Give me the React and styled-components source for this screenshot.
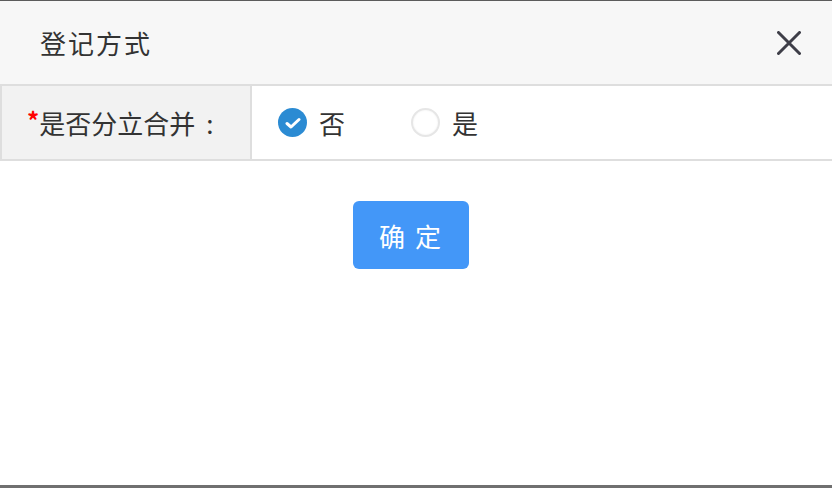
import styled, { createGlobalStyle } from 'styled-components';

const GlobalStyle = createGlobalStyle`
  html, body { margin: 0; padding: 0; background: #fff; }
  body { font-family: "Noto Sans CJK SC", "Noto Sans", sans-serif; color: #333; }
`;

const Frame = styled.div`
  height: 488px;
  box-sizing: border-box;
  border-top: 1px solid #5c5c5c;
  border-bottom: 3px solid #707070;
  display: flex;
  flex-direction: column;
`;

const Header = styled.div`
  height: 83px;
  background: #f7f7f7;
  display: flex;
  align-items: center;
  justify-content: space-between;
  padding: 0 30px 0 40px;
  flex-shrink: 0;
`;

const Title = styled.div`
  font-size: 26px;
  color: #333;
  letter-spacing: 2px;
`;

const CloseButton = styled.button`
  border: 0;
  background: none;
  padding: 0;
  width: 26px;
  height: 26px;
  display: flex;
  align-items: center;
  justify-content: center;
  cursor: pointer;
`;

const FormRow = styled.div`
  display: flex;
  height: 73px;
  border-top: 2px solid #dedede;
  border-bottom: 2px solid #dedede;
  border-left: 2px solid #dedede;
`;

const LabelCell = styled.div`
  width: 250px;
  background: #f2f2f2;
  border-right: 2px solid #dedede;
  display: flex;
  align-items: center;
  padding-left: 25px;
  box-sizing: border-box;
  font-size: 26px;
  color: #333;
`;

const Required = styled.span`
  color: #f00;
  font-size: 24px;
  font-weight: bold;
  align-self: flex-start;
  margin-top: 16px;
`;

const Colon = styled.span`
  margin-left: 11px;
`;

const ValueCell = styled.div`
  flex: 1;
  display: flex;
  align-items: center;
  padding-left: 26px;
`;

const RadioOption = styled.label`
  display: flex;
  align-items: center;
  gap: 12px;
  font-size: 26px;
  color: #333;
  margin-right: 66px;
  cursor: pointer;
`;

const RadioDot = styled.span`
  width: 29px;
  height: 29px;
  border-radius: 50%;
  box-sizing: border-box;
  display: flex;
  align-items: center;
  justify-content: center;
  background: ${p => (p.$checked ? '#2b8bd3' : '#fff')};
  border: ${p => (p.$checked ? 'none' : '2px solid #e6e6e6')};
  box-shadow: ${p => (p.$checked ? 'none' : 'inset 0 0 2px rgba(0,0,0,0.08)')};
`;

const Footer = styled.div`
  display: flex;
  justify-content: center;
  padding: 40px 10px 0 0;
`;

const ConfirmButton = styled.button`
  width: 116px;
  height: 68px;
  border: 0;
  border-radius: 6px;
  background: #4397f8;
  color: #fff;
  font-family: "Noto Sans CJK SC", sans-serif;
  font-size: 26px;
  letter-spacing: 2px;
  cursor: pointer;
`;

const options = [
  { label: '否', checked: true },
  { label: '是', checked: false },
];

function Radio({ label, checked }) {
  return (
    <RadioOption>
      <RadioDot $checked={checked}>
        {checked && (
          <svg width="16" height="12" viewBox="0 0 16 12">
            <path d="M2 6.5 L6 10 L14 2.5" fill="none" stroke="#fff" strokeWidth="3" strokeLinecap="round" strokeLinejoin="round" />
          </svg>
        )}
      </RadioDot>
      {label}
    </RadioOption>
  );
}

export default function App() {
  return (
    <>
      <GlobalStyle />
      <Frame>
        <Header>
          <Title>登记方式</Title>
          <CloseButton aria-label="关闭">
            <svg width="24" height="24" viewBox="0 0 24 24">
              <path d="M1.5 1.5 L22.5 22.5 M22.5 1.5 L1.5 22.5" stroke="#3e3e48" strokeWidth="3" strokeLinecap="round" />
            </svg>
          </CloseButton>
        </Header>

        <FormRow>
          <LabelCell>
            <Required>*</Required>
            是否分立合并<Colon>:</Colon>
          </LabelCell>
          <ValueCell>
            {options.map(o => <Radio key={o.label} {...o} />)}
          </ValueCell>
        </FormRow>

        <Footer>
          <ConfirmButton>确 定</ConfirmButton>
        </Footer>
      </Frame>
    </>
  );
}
